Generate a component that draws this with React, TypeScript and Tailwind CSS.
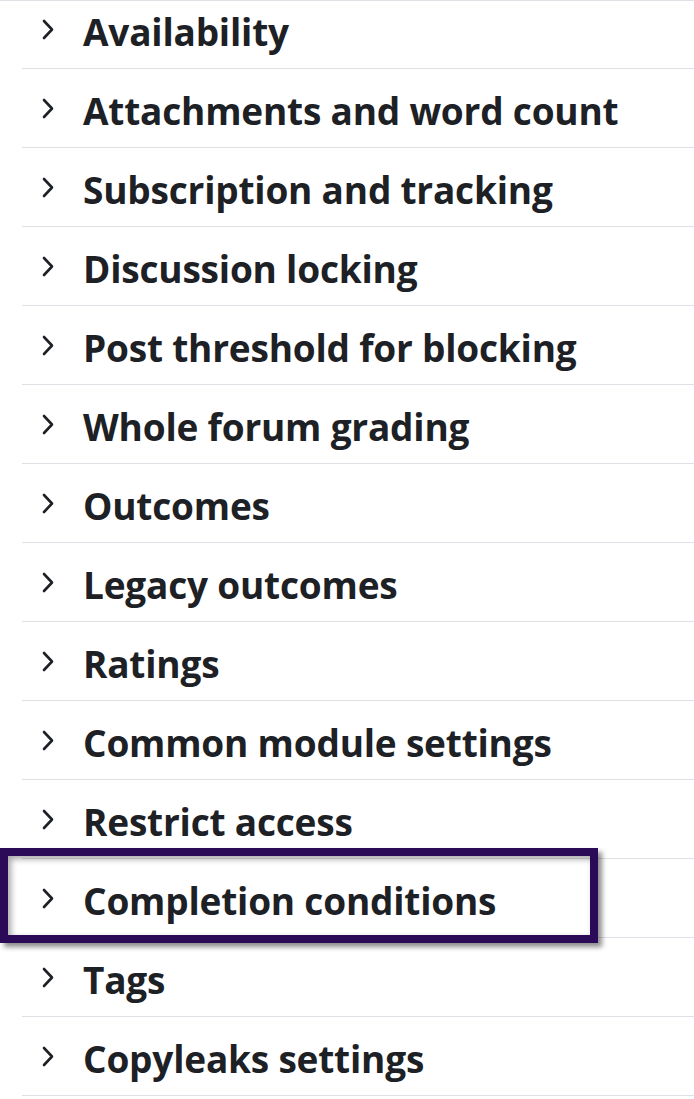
import React from "react";

const sections = [
  "Availability",
  "Attachments and word count",
  "Subscription and tracking",
  "Discussion locking",
  "Post threshold for blocking",
  "Whole forum grading",
  "Outcomes",
  "Legacy outcomes",
  "Ratings",
  "Common module settings",
  "Restrict access",
  "Completion conditions",
  "Tags",
  "Copyleaks settings",
];

function Chevron() {
  return (
    <svg width="12" height="21" viewBox="0 0 12 21" fill="none" className="shrink-0">
      <path d="M2 2 L10 10.5 L2 19" stroke="#1d2125" strokeWidth="2.6" strokeLinecap="round" strokeLinejoin="round" />
    </svg>
  );
}

function App() {
  return (
    <div className="w-[694px] h-[1099px] bg-white overflow-hidden border-t border-[#dee2e6]" style={{ fontFamily: '"Open Sans", "Noto Sans", sans-serif' }}>
      <div className="-mt-[11px]">
        {sections.map((s) => (
          <div key={s} className="relative ml-[22px] h-[79px] border-b border-[#dee2e6] flex items-center">
            {s === "Completion conditions" && (
              <div className="absolute -left-[22px] -top-[11px] w-[598px] h-[95px] border-[8px] border-[#2b0a57] shadow-[4px_4px_5px_rgba(0,0,0,0.45),inset_3px_3px_6px_rgba(0,0,0,0.35)]" />
            )}
            <div className="ml-[20px] w-[41px]">
              <Chevron />
            </div>
            <span className="pt-[4px] text-[37px] font-bold text-[#1d2125] leading-none tracking-[-0.2px]">{s}</span>
          </div>
        ))}
      </div>
    </div>
  );
}

export default App;
